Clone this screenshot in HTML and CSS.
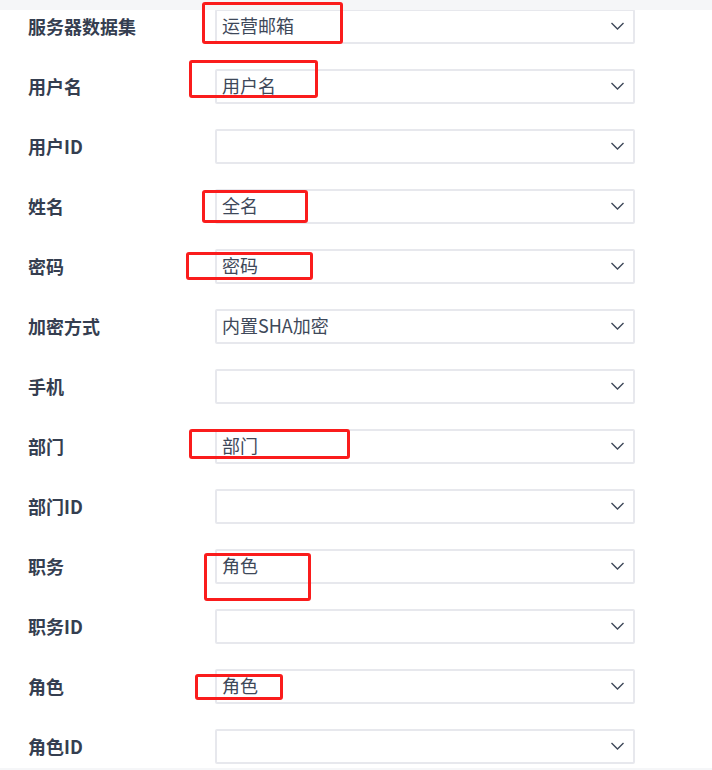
FILE: index.html
```html
<!DOCTYPE html>
<html lang="zh-CN">
<head>
    <meta charset="UTF-8">
    <meta name="viewport" content="width=device-width, initial-scale=1.0">
    <title>用户属性映射</title>
    <link rel="stylesheet" href="styles.css">
</head>
<body>
    <div class="topbar"></div>

    <div class="form">
        <div class="row">
            <label class="label">服务器数据集</label>
            <div class="select"><span class="value">运营邮箱</span><svg class="arrow" viewBox="0 0 14 8"><polyline points="1,1 7,7 13,1"/></svg></div>
            <div class="mark mark-1"></div>
        </div>
        <div class="row">
            <label class="label">用户名</label>
            <div class="select"><span class="value">用户名</span><svg class="arrow" viewBox="0 0 14 8"><polyline points="1,1 7,7 13,1"/></svg></div>
            <div class="mark mark-2"></div>
        </div>
        <div class="row">
            <label class="label">用户ID</label>
            <div class="select"><span class="value"></span><svg class="arrow" viewBox="0 0 14 8"><polyline points="1,1 7,7 13,1"/></svg></div>
        </div>
        <div class="row">
            <label class="label">姓名</label>
            <div class="select"><span class="value">全名</span><svg class="arrow" viewBox="0 0 14 8"><polyline points="1,1 7,7 13,1"/></svg></div>
            <div class="mark mark-3"></div>
        </div>
        <div class="row">
            <label class="label">密码</label>
            <div class="select"><span class="value">密码</span><svg class="arrow" viewBox="0 0 14 8"><polyline points="1,1 7,7 13,1"/></svg></div>
            <div class="mark mark-4"></div>
        </div>
        <div class="row">
            <label class="label">加密方式</label>
            <div class="select"><span class="value">内置SHA加密</span><svg class="arrow" viewBox="0 0 14 8"><polyline points="1,1 7,7 13,1"/></svg></div>
        </div>
        <div class="row">
            <label class="label">手机</label>
            <div class="select"><span class="value"></span><svg class="arrow" viewBox="0 0 14 8"><polyline points="1,1 7,7 13,1"/></svg></div>
        </div>
        <div class="row">
            <label class="label">部门</label>
            <div class="select"><span class="value">部门</span><svg class="arrow" viewBox="0 0 14 8"><polyline points="1,1 7,7 13,1"/></svg></div>
            <div class="mark mark-5"></div>
        </div>
        <div class="row">
            <label class="label">部门ID</label>
            <div class="select"><span class="value"></span><svg class="arrow" viewBox="0 0 14 8"><polyline points="1,1 7,7 13,1"/></svg></div>
        </div>
        <div class="row">
            <label class="label">职务</label>
            <div class="select"><span class="value">角色</span><svg class="arrow" viewBox="0 0 14 8"><polyline points="1,1 7,7 13,1"/></svg></div>
            <div class="mark mark-6"></div>
        </div>
        <div class="row">
            <label class="label">职务ID</label>
            <div class="select"><span class="value"></span><svg class="arrow" viewBox="0 0 14 8"><polyline points="1,1 7,7 13,1"/></svg></div>
        </div>
        <div class="row">
            <label class="label">角色</label>
            <div class="select"><span class="value">角色</span><svg class="arrow" viewBox="0 0 14 8"><polyline points="1,1 7,7 13,1"/></svg></div>
            <div class="mark mark-7"></div>
        </div>
        <div class="row">
            <label class="label">角色ID</label>
            <div class="select"><span class="value"></span><svg class="arrow" viewBox="0 0 14 8"><polyline points="1,1 7,7 13,1"/></svg></div>
        </div>
    </div>

    <div class="bottombar"></div>
</body>
</html>
```

FILE: styles.css
```css
:root {
    --font-color: #353e50;
    --value-color: #3e4859;
    --border-color: #e7e8ed;
    --strip-color: #f5f6f8;
    --mark-color: #fa1c1c;
}

body {
    margin: 0;
    background-color: #fff;
    font-family: "Noto Sans CJK SC", "Noto Sans", sans-serif;
    color: var(--font-color);
    height: 770px;
    overflow: hidden;
}

.topbar {
    height: 10px;
    background-color: var(--strip-color);
    position: relative;
    z-index: 1;
}

.form {
    margin-top: -1px;
    padding-left: 28px;
}

.row {
    position: relative;
    display: flex;
    align-items: center;
    height: 35px;
    margin-bottom: 25px;
}

.label {
    width: 187px;
    font-size: 18px;
    font-weight: bold;
    line-height: 35px;
}

.select {
    box-sizing: border-box;
    width: 420px;
    height: 35px;
    border: 2px solid var(--border-color);
    border-radius: 2px;
    display: flex;
    align-items: center;
    justify-content: space-between;
    padding: 0 8px 0 5px;
}

.value {
    font-size: 18px;
    color: var(--value-color);
    line-height: 1;
    padding-bottom: 4px;
}

.arrow {
    width: 15px;
    height: 8px;
    fill: none;
    stroke: var(--value-color);
    stroke-width: 1.4;
    margin-top: -2px;
}

.bottombar {
    position: absolute;
    left: 0;
    right: 0;
    top: 768px;
    height: 2px;
    background-color: var(--strip-color);
}

/* red annotation frames */
.mark {
    position: absolute;
    box-sizing: border-box;
    border: 3px solid var(--mark-color);
    border-radius: 3px;
    z-index: 2;
}

.mark-1 { left: 174px; top: -7px; width: 141px; height: 42px; }
.mark-2 { left: 161px; top: -9px; width: 129px; height: 38px; }
.mark-3 { left: 174px; top: 1px; width: 106px; height: 33px; }
.mark-4 { left: 158px; top: 3px; width: 127px; height: 28px; }
.mark-5 { left: 161px; top: 0; width: 161px; height: 30px; }
.mark-6 { left: 176px; top: 4px; width: 107px; height: 48px; }
.mark-7 { left: 167px; top: 5px; width: 88px; height: 26px; }
```
